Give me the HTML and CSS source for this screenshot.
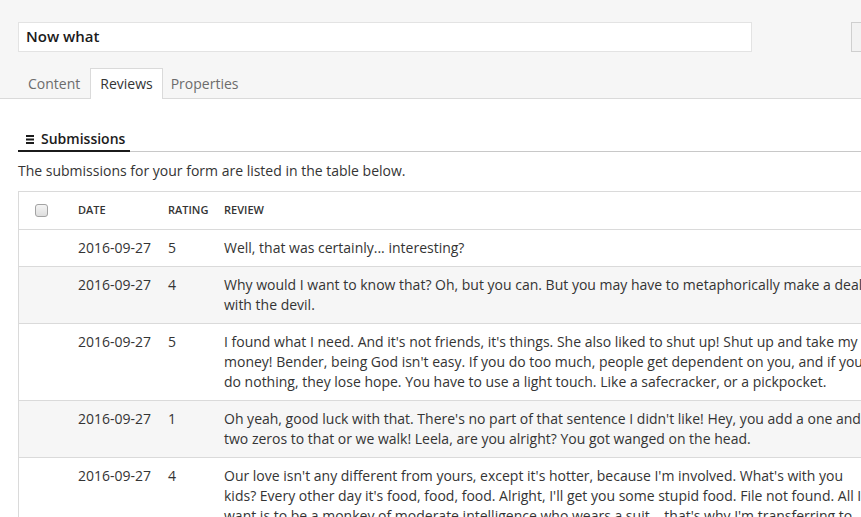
FILE: index.html
```html
<!DOCTYPE html>
<html>
<head>
<meta charset="utf-8">
<link rel="stylesheet" href="styles.css">
</head>
<body>
<div class="page">
  <div class="header">
    <div class="header-top">
      <div class="name-input">Now what</div>
      <div class="header-btn"></div>
    </div>
    <div class="tabs">
      <div class="tab">Content</div>
      <div class="tab active">Reviews</div>
      <div class="tab">Properties</div>
    </div>
  </div>
  <div class="content">
    <div class="section-title">
      <div class="section-label"><svg class="menu-icon" width="8" height="9" viewBox="0 0 8 9"><rect x="0" y="0" width="8" height="2" fill="#1b1b1b"/><rect x="0" y="3.5" width="8" height="2" fill="#1b1b1b"/><rect x="0" y="7" width="8" height="2" fill="#1b1b1b"/></svg>Submissions</div>
    </div>
    <p class="intro">The submissions for your form are listed in the table below.</p>
    <table class="grid">
      <thead>
        <tr>
          <th class="col-check"><span class="checkbox"></span></th>
          <th class="col-date">Date</th>
          <th class="col-rating">Rating</th>
          <th class="col-review">Review</th>
        </tr>
      </thead>
      <tbody>
        <tr>
          <td class="col-check"></td>
          <td>2016-09-27</td>
          <td>5</td>
          <td>Well, that was certainly... interesting?</td>
        </tr>
        <tr class="alt">
          <td class="col-check"></td>
          <td>2016-09-27</td>
          <td>4</td>
          <td>Why would I want to know that? Oh, but you can. But you may have to metaphorically make a deal with the devil.</td>
        </tr>
        <tr>
          <td class="col-check"></td>
          <td>2016-09-27</td>
          <td>5</td>
          <td>I found what I need. And it's not friends, it's things. She also liked to shut up! Shut up and take my money! Bender, being God isn't easy. If you do too much, people get dependent on you, and if you do nothing, they lose hope. You have to use a light touch. Like a safecracker, or a pickpocket.</td>
        </tr>
        <tr class="alt">
          <td class="col-check"></td>
          <td>2016-09-27</td>
          <td>1</td>
          <td>Oh yeah, good luck with that. There's no part of that sentence I didn't like! Hey, you add a one and two zeros to that or we walk! Leela, are you alright? You got wanged on the head.</td>
        </tr>
        <tr>
          <td class="col-check"></td>
          <td>2016-09-27</td>
          <td>4</td>
          <td>Our love isn't any different from yours, except it's hotter, because I'm involved. What's with you kids? Every other day it's food, food, food. Alright, I'll get you some stupid food. File not found. All I want is to be a monkey of moderate intelligence who wears a suit... that's why I'm transferring to business school!</td>
        </tr>
      </tbody>
    </table>
  </div>
</div>
</body>
</html>
```

FILE: styles.css
```css
html, body {
  margin: 0;
  padding: 0;
  overflow: hidden;
  background: #fff;
}
body {
  font-family: "Open Sans", "Noto Sans", sans-serif;
  font-size: 14px;
  line-height: 20px;
  color: #515151;
  width: 861px;
  height: 517px;
}
.page {
  width: 1000px;
}
.header {
  background: #f6f6f6;
  border-bottom: 1px solid #dadada;
  padding: 22px 0 0 18px;
  height: 76px;
}
.header-top {
  display: flex;
  align-items: flex-start;
  height: 30px;
}
.name-input {
  box-sizing: border-box;
  width: 734px;
  height: 30px;
  background: #fff;
  border: 1px solid #e3e3e3;
  padding: 3px 7px;
  font-weight: 600;
  font-size: 15px;
  color: #1b1b1b;
}
.header-btn {
  box-sizing: border-box;
  margin-left: 99px;
  width: 80px;
  height: 30px;
  background: #f2f2f2;
  border: 1px solid #cfcfcf;
}
.tabs {
  display: flex;
  margin-top: 16px;
  margin-left: 0;
}
.tab {
  box-sizing: border-box;
  height: 31px;
  padding: 5px 9px 0 9px;
  color: #6c6c6c;
  font-size: 14px;
  border: 1px solid transparent;
  border-bottom: none;
}
.tab.active {
  background: #fff;
  border-color: #dadada;
  color: #343434;
  margin-bottom: -1px;
  position: relative;
}
.tab:last-child {
  padding-left: 7px;
}
.content {
  padding: 30px 0 0 18px;
}
.section-title {
  border-bottom: 1px solid #c8c8c8;
  width: 900px;
}
.section-label {
  display: inline-flex;
  align-items: center;
  border-bottom: 2px solid #1b1b1b;
  margin-bottom: -1px;
  padding: 0 5px 1px 8px;
  font-weight: 600;
  color: #1b1b1b;
  height: 19px;
}
.menu-icon {
  display: block;
  margin-right: 7px;
  margin-top: 1px;
}
.intro {
  margin: 9px 0 0 0;
  color: #343434;
}
.grid {
  margin-top: 10px;
  width: 859px;
  border-collapse: collapse;
  border-left: 1px solid #dadada;
  border-top: 1px solid #dadada;
  color: #343434;
  table-layout: fixed;
}
.grid th {
  text-align: left;
  font-size: 11px;
  font-weight: 600;
  text-transform: uppercase;
  height: 37px;
  padding: 0 8px;
  border-bottom: 1px solid #dadada;
  color: #343434;
}
.grid td {
  vertical-align: top;
  padding: 8px 8px;
  border-bottom: 1px solid #dadada;
}
.grid tr.alt td {
  background: #f6f6f6;
}
.col-check {
  width: 35px;
}
.col-date {
  width: 74px;
}
.col-rating {
  width: 40px;
}
.checkbox {
  display: block;
  box-sizing: border-box;
  width: 13px;
  height: 13px;
  margin-left: 8px;
  border: 1px solid #a3a3a3;
  border-radius: 3px;
  background: linear-gradient(#f4f4f4, #dedede);
}
```
